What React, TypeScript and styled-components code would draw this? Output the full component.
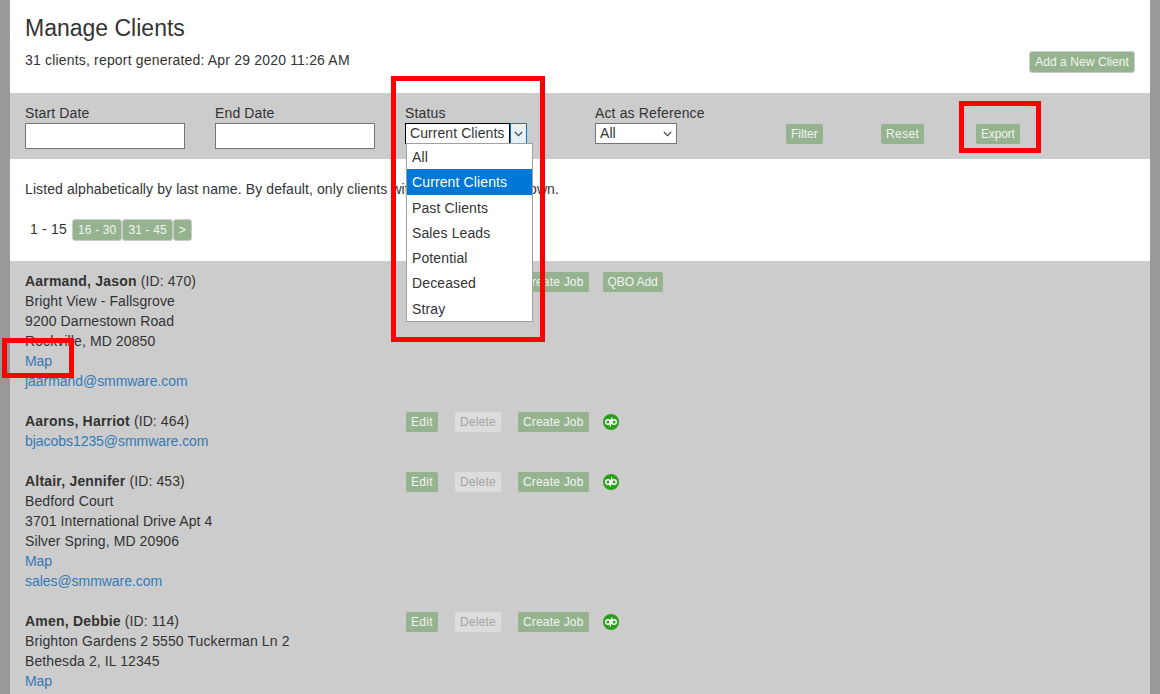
import React from "react";
import styled, { createGlobalStyle } from "styled-components";

const Global = createGlobalStyle`
  html, body { margin: 0; padding: 0; height: 694px; overflow: hidden; background: #999; }
  body { font-family: "Liberation Sans", Arial, sans-serif; font-size: 14px; line-height: 20px; color: #333; letter-spacing: .1px; }
  * { box-sizing: border-box; }
`;
const Page = styled.div`position: relative; height: 694px; overflow: hidden; padding: 0 10px; background: #999;`;
const Sheet = styled.main`background: #fff; min-height: 694px;`;
const Header = styled.header`height: 93px; padding: 15px 15px 20px; display: flex; justify-content: space-between; align-items: flex-end;`;
const TitleBlock = styled.div`align-self: flex-start;`;
const Title = styled.h1`margin: 0 0 9px; font-size: 23px; line-height: 26px; font-weight: 400; letter-spacing: 0;`;
const Summary = styled.p`margin: 0; letter-spacing: .18px;`;
const Button = styled.a<{ $off?: boolean; $track?: number }>`
  display: inline-block; height: 22px; padding: 0 5px; font-size: 12px; line-height: 20px; white-space: nowrap;
  letter-spacing: ${p => p.$track ?? 0}px;
  border: 1px solid #ccc; border-radius: 3px;
  color: ${p => (p.$off ? "#a3a3a3" : "#f1f5ef")}; background: ${p => (p.$off ? "#dcdcdc" : "#95b38f")};
`;
const FilterBar = styled.form`height: 66px; padding: 10px 15px 0; background: #ccc; display: grid; grid-template-columns: repeat(4, 190px) repeat(3, 95px);`;
const Field = styled.div`display: flex; flex-direction: column; align-items: flex-start;`;
const Label = styled.label`height: 20px; line-height: 20px; letter-spacing: .14px;`;
const DateInput = styled.input`width: 160px; height: 26px; border: 1px solid #767676; background: #fff; padding: 0 2px;`;
const SelectBox = styled.div<{ $w: number }>`position: relative; width: ${p => p.$w}px; height: 21px; display: flex; background: #fff; font-size: 14px; line-height: 19px; letter-spacing: .07px;`;
const SelectValue = styled.div<{ $open?: boolean }>`
  flex: 1; padding-left: 4px; border: 1px solid ${p => (p.$open ? "#000" : "#767676")};
  ${p => !p.$open && "border-right: 0;"}
`;
const OpenArrow = styled.div`width: 17px; border: 1px solid #0078d7; background: #e5f1fb; display: grid; place-items: center;`;
const ClosedArrow = styled.div`width: 18px; border: 1px solid #767676; border-left: 0; display: grid; place-items: center;`;
const Menu = styled.ul`
  position: absolute; z-index: 3; top: 20px; left: 1px; width: 127px; height: 179px; margin: 0; padding: 0; list-style: none;
  display: grid; grid-auto-rows: 1fr; background: #fff; border: 1px solid #a0a0a0; font-size: 14px; letter-spacing: .12px;
`;
const MenuItem = styled.li<{ $on?: boolean }>`
  padding: 1.6px 0 0 5px; display: flex; align-items: center;
  background: ${p => (p.$on ? "#0078d7" : "transparent")}; color: ${p => (p.$on ? "#fff" : "#333")};
`;
const ActionCell = styled.div`padding-top: 20px;`;
const Notes = styled.section`height: 102px; padding: 20px 15px 0;`;
const NoteText = styled.p`margin: 0 0 20px;`;
const Pager = styled.nav`display: flex; align-items: center; padding-left: 5px;`;
const PagerCurrent = styled.span`margin-right: 5px; position: relative; top: -1px; letter-spacing: .2px;`;
const Clients = styled.section`background: #ccc; padding: 10px 15px; display: flex; flex-direction: column; gap: 20px;`;
const Client = styled.article`display: grid; grid-template-columns: 380px 1fr;`;
const Line = styled.div`height: 20px; white-space: nowrap;`;
const Name = styled.strong`font-weight: 700; letter-spacing: .2px;`;
const Mail = styled.a`color: #337ab7; letter-spacing: -.05px;`;
const Actions = styled.div`display: flex; gap: 15px; align-items: flex-start;`;
const LastAction = styled.div`margin-left: -3px; height: 22px; display: flex; align-items: center;`;
const IconSpot = styled.div`margin-left: 1px; display: flex;`;
const Frame = styled.div<{ $x: number; $y: number; $w: number; $h: number }>`
  position: absolute; z-index: 5; left: ${p => p.$x}px; top: ${p => p.$y}px; width: ${p => p.$w}px; height: ${p => p.$h}px;
  border: 5px solid #fe0000; pointer-events: none;
`;

const Chevron = () => (
  <svg width="9" height="6" viewBox="0 0 9 6" fill="none" stroke="#444" strokeWidth="1.1"><path d="M.8 1 4.5 4.7 8.2 1" /></svg>
);
const QbIcon = () => (
  <svg width="16" height="16" viewBox="0 0 16 16" aria-label="QuickBooks">
    <circle cx="8" cy="8" r="8" fill="#2ca01c" />
    <g fill="none" stroke="#fff" strokeWidth="1.4">
      <circle cx="5" cy="8" r="2.3" />
      <circle cx="11" cy="8" r="2.3" />
      <path d="M7.3 5.7V12.6M8.7 10.3V3.4" />
    </g>
  </svg>
);

type C = { name: string; id: number; lines: string[]; map?: boolean; mail?: string; qbo?: boolean };
const clients: C[] = [
  { name: "Aarmand, Jason", id: 470, lines: ["Bright View - Fallsgrove", "9200 Darnestown Road", "Rockville, MD 20850"], map: true, mail: "jaarmand@smmware.com", qbo: true },
  { name: "Aarons, Harriot", id: 464, lines: [], mail: "bjacobs1235@smmware.com" },
  { name: "Altair, Jennifer", id: 453, lines: ["Bedford Court", "3701 International Drive Apt 4", "Silver Spring, MD 20906"], map: true, mail: "sales@smmware.com" },
  { name: "Amen, Debbie", id: 114, lines: ["Brighton Gardens 2 5550 Tuckerman Ln 2", "Bethesda 2, IL 12345"], map: true },
];
const statuses = ["All", "Current Clients", "Past Clients", "Sales Leads", "Potential", "Deceased", "Stray"];

export default function App() {
  return (
    <Page>
      <Global />
      <Sheet>
        <Header>
          <TitleBlock>
            <Title>Manage Clients</Title>
            <Summary>31 clients, report generated: Apr 29 2020 11:26 AM</Summary>
          </TitleBlock>
          <Button $track={0.07}>Add a New Client</Button>
        </Header>
        <FilterBar>
          <Field><Label>Start Date</Label><DateInput /></Field>
          <Field><Label>End Date</Label><DateInput /></Field>
          <Field>
            <Label>Status</Label>
            <SelectBox $w={122}>
              <SelectValue $open>Current Clients</SelectValue>
              <OpenArrow><Chevron /></OpenArrow>
              <Menu>
                {statuses.map(s => <MenuItem key={s} $on={s === "Current Clients"}>{s}</MenuItem>)}
              </Menu>
            </SelectBox>
          </Field>
          <Field>
            <Label>Act as Reference</Label>
            <SelectBox $w={82}>
              <SelectValue>All</SelectValue>
              <ClosedArrow><Chevron /></ClosedArrow>
            </SelectBox>
          </Field>
          <ActionCell><Button>Filter</Button></ActionCell>
          <ActionCell><Button $track={0.4}>Reset</Button></ActionCell>
          <ActionCell><Button $track={-0.15}>Export</Button></ActionCell>
        </FilterBar>
        <Notes>
          <NoteText>Listed alphabetically by last name. By default, only clients with Current status shown.</NoteText>
          <Pager>
            <PagerCurrent>1 - 15</PagerCurrent>
            <Button $track={0.15}>16 - 30</Button>
            <Button $track={0.15}>31 - 45</Button>
            <Button $track={0.15}>&gt;</Button>
          </Pager>
        </Notes>
        <Clients>
          {clients.map(c => (
            <Client key={c.id}>
              <div>
                <Line><Name>{c.name}</Name> (ID: {c.id})</Line>
                {c.lines.map(l => <Line key={l}>{l}</Line>)}
                {c.map && <Line><Mail>Map</Mail></Line>}
                {c.mail && <Line><Mail>{c.mail}</Mail></Line>}
              </div>
              <Actions>
                <Button $track={0.3}>Edit</Button>
                <Button $off $track={0.22}>Delete</Button>
                <Button $track={0.2}>Create Job</Button>
                <LastAction>{c.qbo ? <Button $track={-0.1}>QBO Add</Button> : <IconSpot><QbIcon /></IconSpot>}</LastAction>
              </Actions>
            </Client>
          ))}
        </Clients>
      </Sheet>
      <Frame $x={391} $y={76} $w={154} $h={266} />
      <Frame $x={959} $y={101} $w={82} $h={52} />
      <Frame $x={2} $y={338} $w={72} $h={40} />
    </Page>
  );
}
